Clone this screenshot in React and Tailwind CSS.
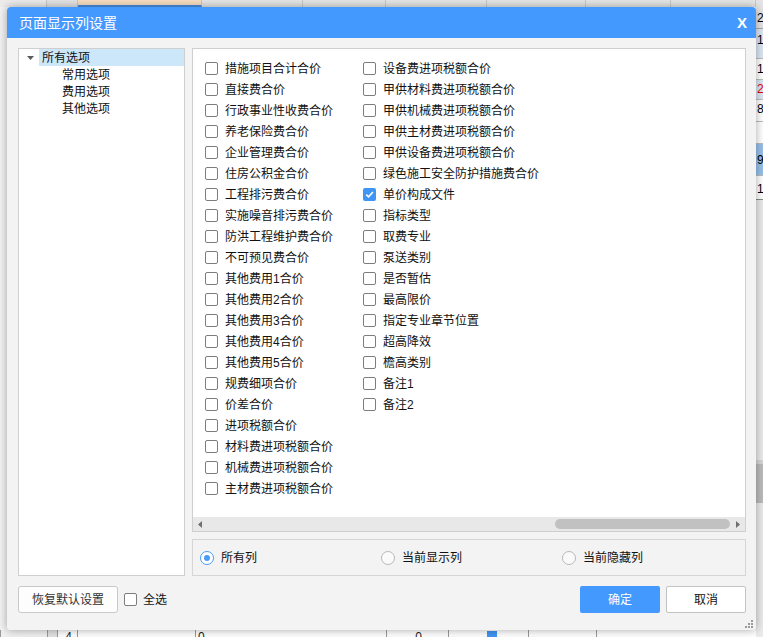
import React from "react";

const col1 = [
  "措施项目合计合价",
  "直接费合价",
  "行政事业性收费合价",
  "养老保险费合价",
  "企业管理费合价",
  "住房公积金合价",
  "工程排污费合价",
  "实施噪音排污费合价",
  "防洪工程维护费合价",
  "不可预见费合价",
  "其他费用1合价",
  "其他费用2合价",
  "其他费用3合价",
  "其他费用4合价",
  "其他费用5合价",
  "规费细项合价",
  "价差合价",
  "进项税额合价",
  "材料费进项税额合价",
  "机械费进项税额合价",
  "主材费进项税额合价",
];

const col2 = [
  "设备费进项税额合价",
  "甲供材料费进项税额合价",
  "甲供机械费进项税额合价",
  "甲供主材费进项税额合价",
  "甲供设备费进项税额合价",
  "绿色施工安全防护措施费合价",
  "单价构成文件",
  "指标类型",
  "取费专业",
  "泵送类别",
  "是否暂估",
  "最高限价",
  "指定专业章节位置",
  "超高降效",
  "檐高类别",
  "备注1",
  "备注2",
];

const Box = ({ checked }) =>
  checked ? (
    <span className="w-[13px] h-[13px] rounded-[2px] bg-[#3f95f5] flex items-center justify-center shrink-0">
      <svg width="9" height="9" viewBox="0 0 9 9">
        <path d="M1.2 4.6 L3.6 6.9 L7.9 2" stroke="white" strokeWidth="1.6" fill="none" />
      </svg>
    </span>
  ) : (
    <span className="w-[13px] h-[13px] rounded-[2px] border border-[#7d7d7d] bg-white shrink-0" />
  );

const Item = ({ label }) => (
  <div className="h-[21px] flex items-center gap-[7px]">
    <Box checked={label === "单价构成文件"} />
    <span className="text-[12px] leading-none text-[#111]">{label}</span>
  </div>
);

const Radio = ({ label, on }) => (
  <div className="w-[181px] flex items-center gap-[7px]">
    {on ? (
      <span className="w-[14px] h-[14px] rounded-full border border-[#4a9bf5] bg-white flex items-center justify-center">
        <span className="w-[6px] h-[6px] rounded-full bg-[#4a9bf5]" />
      </span>
    ) : (
      <span className="w-[14px] h-[14px] rounded-full border border-[#b9b9b9] bg-[#fafafa]" />
    )}
    <span className="text-[12px] leading-none text-[#111]">{label}</span>
  </div>
);

const topCells = [
  { w: 47, bg: "bg-[#ececec]" },
  { w: 31, bg: "bg-[#e4e4e4]" },
  { w: 124, bg: "bg-[#f9dfc2]", blue: true },
  { w: 101, bg: "bg-[#e6e6e6]" },
  { w: 83, bg: "bg-[#e6e6e6]" },
  { w: 101, bg: "bg-[#e6e6e6]" },
  { w: 99, bg: "bg-[#e6e6e6]" },
  { w: 85, bg: "bg-[#e6e6e6]" },
  { w: 85, bg: "bg-[#e6e6e6]" },
];

const bottomCells = [
  { w: 47, bg: "bg-[#f0f0f0]", t: "" },
  { w: 10, bg: "bg-[#e2e2e2]", t: "" },
  { w: 20, bg: "bg-white", t: "4", c: true },
  { w: 118, bg: "bg-white", t: "" },
  { w: 191, bg: "bg-white", t: "0" },
  { w: 62, bg: "bg-white", t: "0", c: true },
  { w: 80, bg: "bg-white", t: "", chk: true },
  { w: 68, bg: "bg-white", t: "" },
  { w: 160, bg: "bg-white", t: "" },
];

export default function App() {
  return (
    <div className="relative w-[763px] h-[637px] overflow-hidden bg-[#f2f2f2] font-['Liberation_Sans','Noto_Sans_CJK_SC',sans-serif] flex">
      {/* spreadsheet behind the dialog */}
      <div className="w-[756px] h-full flex flex-col">
        <div className="h-[7px] flex">
          {topCells.map((c, i) => (
            <div
              key={i}
              style={{ width: c.w }}
              className={`h-full border-r border-[#c9c9c9] ${c.bg} ${c.blue ? "border-b-2 border-b-[#4a8fe0]" : ""}`}
            />
          ))}
        </div>
        <div className="flex-1 bg-[#f3f3f3]" />
        <div className="h-[7px] flex">
          {bottomCells.map((c, i) => (
            <div
              key={i}
              style={{ width: c.w }}
              className={`h-full border-l border-[#9a9a9a] ${c.bg} overflow-hidden text-[12px] leading-none pt-[1px] pl-[2px] text-[#222] ${c.c ? "text-center" : ""}`}
            >
              {c.chk ? <span className="block ml-[36px] w-[10px] h-[6px] bg-[#3f95f5]" /> : c.t}
            </div>
          ))}
        </div>
      </div>
      <div className="w-[7px] h-full flex flex-col text-[12px] leading-none overflow-hidden">
        <div className="h-[29px] bg-[#e4e4e4] border-b border-[#a8a8a8] pt-[12px] pl-[1px]">25</div>
        <div className="h-[30px] bg-[#dce6f4] border-b border-[#bdbdbd] pt-[5px] pl-[1px]">1</div>
        <div className="h-[21px] bg-white border-b border-[#bdbdbd] pt-[4px] pl-[1px]">1</div>
        <div className="h-[20px] bg-[#dce6f4] border-b border-[#bdbdbd] pt-[3px] pl-[1px] text-[#e00]">25</div>
        <div className="h-[22px] bg-white border-b border-[#bdbdbd] pt-[3px] pl-[1px]">80</div>
        <div className="h-[22px] bg-white border-b border-[#bdbdbd]" />
        <div className="h-[32px] bg-[#98c0ea] border-b border-[#bdbdbd] pt-[10px] pl-[1px]">95</div>
        <div className="h-[24px] bg-white border-b border-[#8a8a8a] pt-[7px] pl-[1px]">1</div>
        <div className="h-[260px] bg-[#ebebeb]" />
        <div className="h-[43px] bg-[#bcbcbc] border-t-4 border-[#d6d6d6]" />
        <div className="flex-1 bg-[#ebebeb]" />
      </div>

      {/* dialog */}
      <div className="absolute left-[7px] top-[7px] w-[749px] h-[623px] bg-[#f3f3f3] rounded-t-[4px] rounded-b-[3px] shadow-[0_0_10px_rgba(0,0,0,0.35)] flex flex-col overflow-hidden">
        <div className="h-[31px] shrink-0 bg-[#4499fe] flex items-center justify-between pl-[12px] pr-[9px] text-white">
          <span className="text-[14px] font-['Noto_Sans_CJK_SC',sans-serif]">页面显示列设置</span>
          <span className="text-[15px] font-bold leading-none">X</span>
        </div>

        <div className="flex-1 flex flex-col pl-[11px] pr-[10px] pt-[10px] pb-[17px]">
          <div className="h-[528px] flex gap-[7px]">
            {/* tree */}
            <div className="w-[167px] bg-white border border-[#cfcfcf] flex flex-col text-[12px] leading-none text-[#111]">
              <div className="h-[17px] flex items-center">
                <div className="w-[20px] h-full flex items-center pl-[8px]">
                  <svg width="7" height="4" viewBox="0 0 7 4">
                    <path d="M0 0 H7 L3.5 4 Z" fill="#5a5a5a" />
                  </svg>
                </div>
                <div className="flex-1 h-full bg-[#cce6fa] flex items-center pl-[3px]">所有选项</div>
              </div>
              {["常用选项", "费用选项", "其他选项"].map((t) => (
                <div key={t} className="h-[17px] flex items-center pl-[43px]">
                  {t}
                </div>
              ))}
            </div>

            {/* right column */}
            <div className="flex-1 flex flex-col gap-[7px]">
              <div className="h-[484px] bg-white border border-[#cfcfcf] flex flex-col">
                <div className="flex-1 flex pt-[9px] pl-[12px]">
                  <div className="w-[158px] flex flex-col">
                    {col1.map((t) => (
                      <Item key={t} label={t} />
                    ))}
                  </div>
                  <div className="flex flex-col">
                    {col2.map((t) => (
                      <Item key={t} label={t} />
                    ))}
                  </div>
                </div>
                <div className="h-[14px] bg-[#e8e8e8] flex items-center">
                  <div className="w-[14px] flex items-center justify-center">
                    <svg width="4" height="7" viewBox="0 0 4 7">
                      <path d="M4 0 V7 L0 3.5 Z" fill="#6f6f6f" />
                    </svg>
                  </div>
                  <div className="flex-1" />
                  <div className="w-[175px] h-[10px] rounded-full bg-[#c1c1c1] mr-[1px]" />
                  <div className="w-[14px] flex items-center justify-center">
                    <svg width="4" height="7" viewBox="0 0 4 7">
                      <path d="M0 0 V7 L4 3.5 Z" fill="#6f6f6f" />
                    </svg>
                  </div>
                </div>
              </div>
              <div className="h-[37px] border border-[#d6d6d6] flex items-center pl-[7px]">
                <Radio label="所有列" on />
                <Radio label="当前显示列" />
                <Radio label="当前隐藏列" />
              </div>
            </div>
          </div>

          {/* buttons */}
          <div className="mt-[10px] h-[27px] flex items-center text-[12px] leading-none">
            <button className="w-[100px] h-[27px] bg-[#fdfdfd] border border-[#c9c9c9] rounded-[3px] text-[#333]">
              恢复默认设置
            </button>
            <div className="ml-[6px] flex items-center gap-[6px] text-[#111]">
              <Box />
              <span>全选</span>
            </div>
            <div className="flex-1" />
            <button className="w-[80px] h-[27px] bg-[#4499fe] rounded-[2px] text-white">确定</button>
            <button className="ml-[6px] w-[80px] h-[27px] bg-white border border-[#c3c3c3] rounded-[2px] text-[#111]">
              取消
            </button>
          </div>
        </div>

        <svg className="absolute right-[3px] bottom-[2px]" width="8" height="8" viewBox="0 0 8 8">
          <rect x="6" y="0" width="2" height="2" fill="#9a9a9a" />
          <rect x="3" y="3" width="2" height="2" fill="#9a9a9a" />
          <rect x="6" y="3" width="2" height="2" fill="#9a9a9a" />
          <rect x="0" y="6" width="2" height="2" fill="#9a9a9a" />
          <rect x="3" y="6" width="2" height="2" fill="#9a9a9a" />
          <rect x="6" y="6" width="2" height="2" fill="#9a9a9a" />
        </svg>
      </div>
    </div>
  );
}
